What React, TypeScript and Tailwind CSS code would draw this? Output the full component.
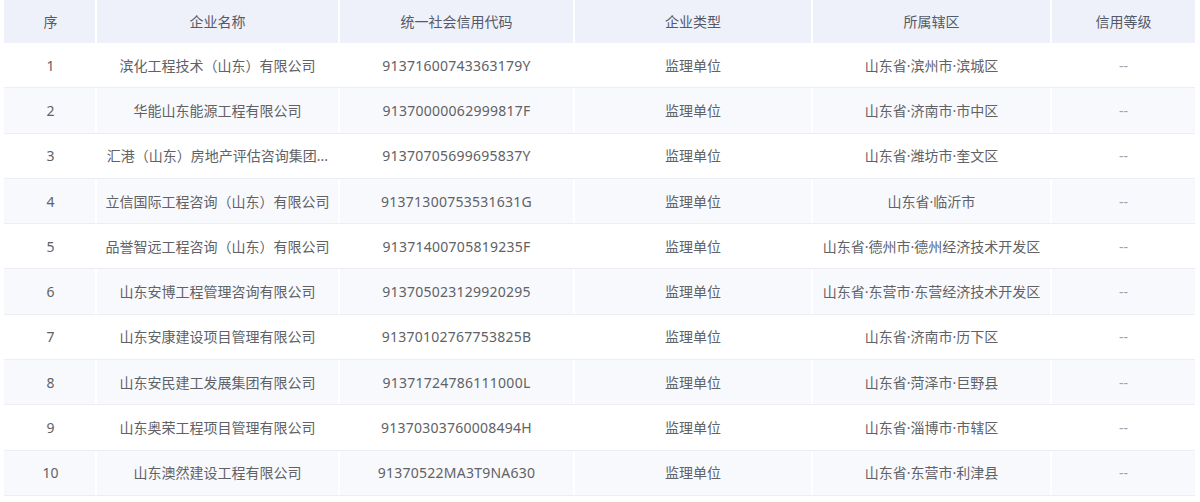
import React from "react";

type Row = {
  name: string;
  code: string;
  type: string;
  area: string;
  level: string;
};

const rows: Row[] = [
  { name: "滨化工程技术（山东）有限公司", code: "91371600743363179Y", type: "监理单位", area: "山东省·滨州市·滨城区", level: "--" },
  { name: "华能山东能源工程有限公司", code: "91370000062999817F", type: "监理单位", area: "山东省·济南市·市中区", level: "--" },
  { name: "汇港（山东）房地产评估咨询集团...", code: "91370705699695837Y", type: "监理单位", area: "山东省·潍坊市·奎文区", level: "--" },
  { name: "立信国际工程咨询（山东）有限公司", code: "91371300753531631G", type: "监理单位", area: "山东省·临沂市", level: "--" },
  { name: "品誉智远工程咨询（山东）有限公司", code: "91371400705819235F", type: "监理单位", area: "山东省·德州市·德州经济技术开发区", level: "--" },
  { name: "山东安博工程管理咨询有限公司", code: "913705023129920295", type: "监理单位", area: "山东省·东营市·东营经济技术开发区", level: "--" },
  { name: "山东安康建设项目管理有限公司", code: "91370102767753825B", type: "监理单位", area: "山东省·济南市·历下区", level: "--" },
  { name: "山东安民建工发展集团有限公司", code: "91371724786111000L", type: "监理单位", area: "山东省·菏泽市·巨野县", level: "--" },
  { name: "山东奥荣工程项目管理有限公司", code: "91370303760008494H", type: "监理单位", area: "山东省·淄博市·市辖区", level: "--" },
  { name: "山东澳然建设工程有限公司", code: "91370522MA3T9NA630", type: "监理单位", area: "山东省·东营市·利津县", level: "--" },
];

const cols = ["w-[93px]", "w-[243px]", "w-[235px]", "w-[238px]", "w-[239px]", "w-[143px]"];
const headers = ["序", "企业名称", "统一社会信用代码", "企业类型", "所属辖区", "信用等级"];

const App: React.FC = () => {
  return (
    <div
      className="w-[1200px] h-[502px] bg-white px-[4px] overflow-hidden"
      style={{ fontFamily: '"Noto Sans", "Noto Sans CJK SC", sans-serif' }}
    >
      <div className="w-[1191px] text-[14px] text-[#606266]">
        {/* Header */}
        <div className="flex h-[43px] bg-[#eef0fa] text-[#555a66]">
          {headers.map((h, i) => (
            <div
              key={h}
              className={`${cols[i]} flex items-center justify-center ${i < 5 ? "border-r-2 border-white" : ""} ${i === 0 ? "pl-[2px]" : ""}`}
            >
              {h}
            </div>
          ))}
        </div>

        {/* Body */}
        {rows.map((r, idx) => {
          const striped = idx % 2 === 1;
          const cells = [String(idx + 1), r.name, r.code, r.type, r.area, r.level];
          return (
            <div
              key={r.code}
              className={`flex h-[45.3px] border-b border-[#eceef4] ${striped ? "bg-[#f8f9fd]" : "bg-white"}`}
            >
              {cells.map((c, i) => (
                <div
                  key={i}
                  className={`${cols[i]} flex items-center justify-center whitespace-nowrap ${
                    i < 5 ? "border-r-2 border-white" : ""
                  } ${i === 0 ? "pl-[2px]" : ""} ${i === 2 ? "tracking-[0.25px]" : ""} ${i === 5 ? "text-[#a0a3ab]" : ""}`}
                >
                  {c}
                </div>
              ))}
            </div>
          );
        })}
      </div>
    </div>
  );
};

export default App;
